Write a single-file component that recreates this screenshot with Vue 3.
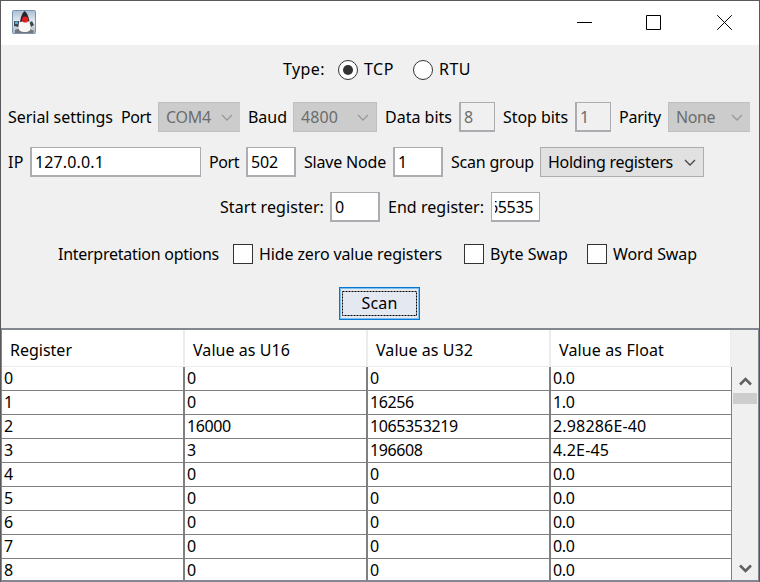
<script setup>
const rows = [
  ['0', '0', '0', '0.0'],
  ['1', '0', '16256', '1.0'],
  ['2', '16000', '1065353219', '2.98286E-40'],
  ['3', '3', '196608', '4.2E-45'],
  ['4', '0', '0', '0.0'],
  ['5', '0', '0', '0.0'],
  ['6', '0', '0', '0.0'],
  ['7', '0', '0', '0.0'],
  ['8', '0', '0', '0.0'],
]
const headers = [
  { text: 'Register', width: 62 },
  { text: 'Value as U16', width: 97 },
  { text: 'Value as U32', width: 97 },
  { text: 'Value as Float', width: 105 },
]

// Spreads a text's letters so that its advance equals the given width.
const vFit = {
  mounted(el, { value }) {
    const natural = el.getBoundingClientRect().width
    el.style.letterSpacing = (value - natural) / el.textContent.length + 'px'
  },
}
</script>

<template>
  <div class="window">
    <header class="titlebar">
      <svg class="duke" width="24" height="24" viewBox="0 0 24 24">
        <defs>
          <linearGradient id="sky" x1="0" y1="0" x2="0" y2="1">
            <stop offset="0" stop-color="#a9bfd3" />
            <stop offset=".5" stop-color="#e6edf3" />
            <stop offset="1" stop-color="#aab0b7" />
          </linearGradient>
        </defs>
        <rect x=".5" y=".5" width="23" height="23" rx="1" fill="url(#sky)" stroke="#7894ae" />
        <path d="M2 11l5 0 2 4-3 2-4-1z" fill="#41474e" />
        <path d="M3 11.500h3v2.500H3z" fill="#5aa9dc" />
        <path d="M17 13l3-2 2 4-3 2z" fill="#44474c" />
        <path d="M3 20l5-2 8 0 6 3-1 2H3z" fill="#73777c" />
        <path d="M7 20c-1-4-.5-8 2-10h7c2.500 3 3 7 2 10.500L15 22h-3.500L9 21.500z" fill="#f6f6f4" />
        <path d="M12.500 1c2.500 1.500 4 5 5 10.500-3-.5-7-.5-9.500.5C8.500 8 10 3 12.500 1z" fill="#25292e" />
        <circle cx="13.200" cy="9.500" r="3.100" fill="#e81a20" />
      </svg>
      <div class="controls">
        <svg width="15" height="15" viewBox="0 0 15 15"><path d="M0 7.500h15" stroke="#000" /></svg>
        <svg width="15" height="15" viewBox="0 0 15 15"><path d="M.5.5h14v14H.5z" fill="none" stroke="#000" /></svg>
        <svg class="close" width="15" height="15" viewBox="0 0 15 15"><path d="M.2.2l14.600 14.600M14.800.2L.2 14.800" stroke="#000" /></svg>
      </div>
    </header>

    <main class="form">
      <div class="row type">
        <div class="type-label"><span v-fit="42">Type:</span></div>
        <label class="choice"><i class="radio on"></i><span v-fit="30">TCP</span></label>
        <label class="choice"><i class="radio"></i><span v-fit="32">RTU</span></label>
      </div>

      <div class="row serial">
        <div class="label w106"><span v-fit="105">Serial settings</span></div>
        <div class="label w31"><span v-fit="30">Port</span></div>
        <div class="combo off w82 cut"><span v-fit="45">COM4</span><svg class="chev" viewBox="0 0 12 7"><path d="M1 1l5 5 5-5" /></svg></div>
        <div class="label w39"><span v-fit="39">Baud</span></div>
        <div class="combo off w84"><span v-fit="37">4800</span><svg class="chev" viewBox="0 0 12 7"><path d="M1 1l5 5 5-5" /></svg></div>
        <div class="label w68"><span v-fit="67">Data bits</span></div>
        <div class="field off w36"><span v-fit="9">8</span></div>
        <div class="label w66"><span v-fit="65">Stop bits</span></div>
        <div class="field off w36"><span v-fit="9">1</span></div>
        <div class="label w43"><span v-fit="42">Parity</span></div>
        <div class="combo off w82 cut"><span v-fit="39">None</span><svg class="chev" viewBox="0 0 12 7"><path d="M1 1l5 5 5-5" /></svg></div>
      </div>

      <div class="row network">
        <div class="label w16"><span v-fit="16">IP</span></div>
        <div class="field w171"><span v-fit="69">127.0.0.1</span></div>
        <div class="label w31"><span v-fit="30">Port</span></div>
        <div class="field w50"><span v-fit="27">502</span></div>
        <div class="label w83"><span v-fit="82">Slave Node</span></div>
        <div class="field w50"><span v-fit="9">1</span></div>
        <div class="label w83"><span v-fit="83">Scan group</span></div>
        <div class="combo w164"><span v-fit="125">Holding registers</span><svg class="chev" viewBox="0 0 12 7"><path d="M1 1l5 5 5-5" /></svg></div>
      </div>

      <div class="row range">
        <div class="label w104"><span v-fit="104">Start register:</span></div>
        <div class="field w50"><span v-fit="9">0</span></div>
        <div class="label w97"><span v-fit="96">End register:</span></div>
        <div class="field w49 scrolled"><div class="clip"><span v-fit="44">65535</span></div></div>
      </div>

      <div class="row options">
        <div class="label w162"><span v-fit="161">Interpretation options</span></div>
        <label class="choice first"><i class="check"></i><span v-fit="183">Hide zero value registers</span></label>
        <label class="choice second"><i class="check"></i><span v-fit="78">Byte Swap</span></label>
        <label class="choice third"><i class="check"></i><span v-fit="84">Word Swap</span></label>
      </div>

      <div class="row action">
        <button class="scan">
          <svg class="focus" width="75" height="25" viewBox="0 0 75 25"><rect x=".5" y=".5" width="74" height="24" fill="none" stroke="#000" stroke-dasharray="2 1" /></svg>
          <span v-fit="36">Scan</span>
        </button>
      </div>
    </main>

    <section class="grid">
      <div class="table">
        <div class="head">
          <div v-for="h in headers" :key="h.text" class="th"><span v-fit="h.width">{{ h.text }}</span></div>
        </div>
        <div v-for="r in rows" :key="r[0]" class="tr">
          <div v-for="(c, i) in r" :key="i" class="td" :class="{ exponent: c.includes('E') }"><span>{{ c }}</span></div>
        </div>
      </div>
      <div class="scrollbar">
        <svg width="13" height="10" viewBox="0 0 13 10"><path d="M1 8.500l5.500-5.500L12 8.500" /></svg>
        <div class="thumb"></div>
        <svg class="down" width="13" height="10" viewBox="0 0 13 10"><path d="M1 1.500L6.500 7 12 1.500" /></svg>
      </div>
    </section>
  </div>
</template>

<style>
body { background: #f0f0f0; overflow: hidden; }
</style>

<style scoped>
* { box-sizing: border-box; }
.window {
  width: 760px; height: 582px; overflow: hidden; background: #f0f0f0;
  border: 1px solid #58585d; border-bottom: 0;
  font: 16px/20px "Noto Sans", sans-serif; color: #000;
  display: flex; flex-direction: column;
}
span { white-space: pre; flex: none; }
.titlebar { height: 44px; flex: none; background: #fff; display: flex; justify-content: space-between; padding: 9px 27px 0 11px; }
.controls { display: flex; gap: 54px; padding-top: 5px; }
.controls svg { display: block; }
.controls .close { margin-left: 2px; }
.form { flex: none; }
.row { display: flex; align-items: center; gap: 7px; padding-left: 6px; height: 44px; }
.type { height: 50px; padding-left: 282px; gap: 0; }
.type-label { width: 55px; display: flex; }
.type span { padding-bottom: 2px; }
.choice { display: flex; align-items: center; gap: 6px; }
.type .choice { width: 75px; }
.network { height: 46px; }
.range { padding-left: 218px; }
.options { height: 50px; padding-left: 56px; gap: 0; }
.first { margin-left: 14px; width: 231px; }
.second { width: 123px; }
.label { flex: none; display: flex; padding-left: 1px; }
.radio { width: 20px; height: 20px; border: 1px solid #333; border-radius: 50%; background: #fff; display: flex; align-items: center; justify-content: center; flex: none; }
.on::before { content: ""; width: 10px; height: 10px; border-radius: 50%; background: #333; }
.check { width: 20px; height: 20px; border: 1px solid #333; background: #fff; flex: none; }
.field { flex: none; height: 30px; background: #fff; border: 1px solid #abadb3; border-width: 1px 1px 2px 2px; padding-left: 3px; display: flex; align-items: center; }
.field.off { background: #f0f0f0; color: #6d6d6d; border-right-width: 1px; }
.w50 { border-right-width: 2px; }
.scrolled { border-left-width: 1px; }
.clip { width: 40px; overflow: hidden; display: flex; justify-content: flex-end; padding-right: 2px; }
.combo { flex: none; height: 30px; background: #e1e1e1; border: 1px solid #adadad; display: flex; align-items: center; justify-content: space-between; padding: 0 7px; }
.combo.off { background: #ccc; border-color: #bfbfbf; color: #6d6d6d; }
.cut { border-right: 0; }
.chev { width: 12px; height: 7px; fill: none; stroke: #444; stroke-width: 1.300; }
.off .chev { stroke: #999; }
.w16 { width: 16px; } .w31 { width: 31px; } .w36 { width: 36px; } .w39 { width: 39px; }
.w43 { width: 43px; } .w49 { width: 49px; } .w50 { width: 50px; } .w66 { width: 66px; }
.w68 { width: 68px; } .w82 { width: 82px; } .w83 { width: 83px; } .w84 { width: 84px; }
.w97 { width: 97px; } .w104 { width: 104px; } .w106 { width: 106px; } .w162 { width: 162px; }
.w164 { width: 164px; } .w171 { width: 171px; }
.action { height: 49px; padding-left: 338px; }
.scan { position: relative; width: 81px; height: 33px; margin: 0; padding: 0 0 2px; border: 1px solid #0078d7; box-shadow: inset 0 0 0 1px #7fbdec; background: #e3e8f1; font: inherit; color: #000; display: flex; align-items: center; justify-content: center; }
.focus { position: absolute; left: 2px; top: 3px; }
.grid { flex: 1; min-height: 0; margin-left: -1px; border: 2px solid #828790; border-right-width: 1px; display: flex; overflow: hidden; }
.table { width: 730px; flex: none; }
.head { display: flex; height: 37px; background: #fff; border-bottom: 1px solid #ececec; width: 729px; }
.th { width: 183px; padding: 4px 0 0 8px; display: flex; align-items: center; border-right: 2px solid #ececec; }
.th:last-child { width: 180px; border-right-width: 1px; }
.tr { display: flex; height: 24px; background: #fff; border-bottom: 1px solid #808080; }
.td { width: 183px; border-right: 2px solid #808080; padding: 0 0 2px 2px; display: flex; align-items: center; letter-spacing: -.38px; }
.exponent { letter-spacing: .17px; }
.td:last-child { width: 181px; border-right-width: 1px; }
.scrollbar { flex: 1; padding: 46px 1px 6px 1px; display: flex; flex-direction: column; align-items: center; }
.scrollbar svg { fill: none; stroke: #606060; stroke-width: 2.500; flex: none; }
.thumb { width: 100%; height: 11px; background: #cdcdcd; margin-top: 7px; }
.down { margin-top: auto; }
</style>
